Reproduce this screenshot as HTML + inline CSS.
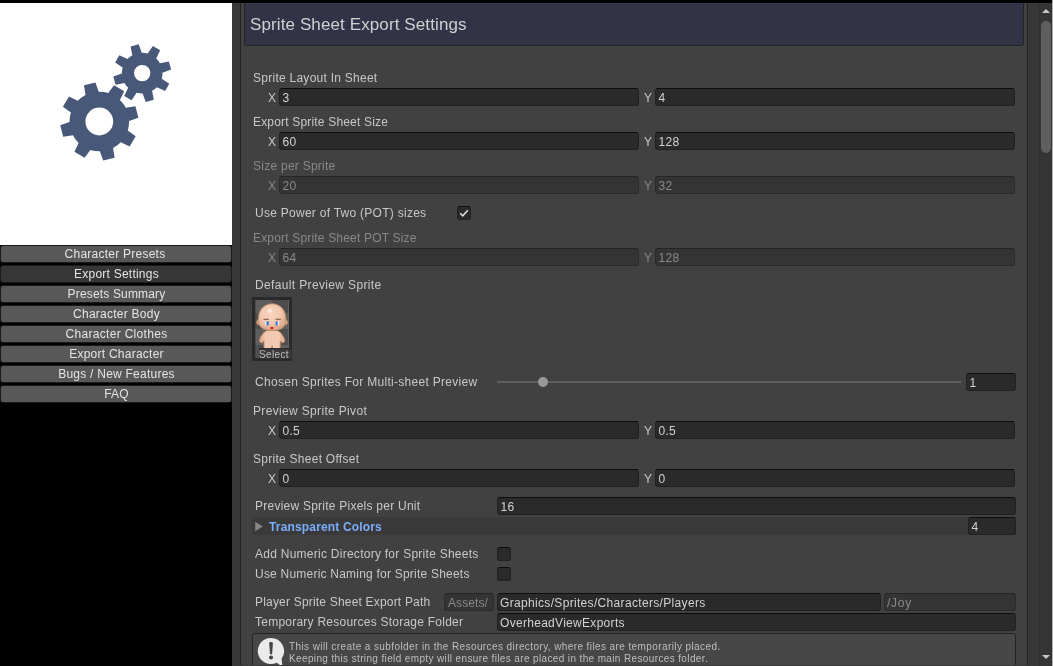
<!DOCTYPE html><html lang="en"><head><meta charset="utf-8"><title>Sprite Sheet Export Settings</title><style>
*{box-sizing:border-box;margin:0;padding:0}
html,body{width:1053px;height:666px;overflow:hidden;background:#383838}
body{position:relative;font-family:"Liberation Sans",sans-serif;font-size:12px;color:#d2d2d2;line-height:18px;-webkit-font-smoothing:antialiased}
.abs{position:absolute}
.lbl,.fld,.btn,.t{will-change:transform}
#topbar{left:0;top:0;width:1052px;height:3px;background:#000}
#left{left:0;top:3px;width:232px;height:663px;background:#000}
#logo{left:0;top:0;width:232px;height:242px;background:#fff}
.btn{position:absolute;left:0;width:232px;height:18px;border:1px solid #1a1a1a;border-radius:3px;background:#585858;color:#e4e4e4;text-align:center;padding-left:1px;line-height:16px;letter-spacing:.25px;white-space:nowrap}
.btn.sel{background:#363636}
#pane{left:240px;top:3px;width:788px;height:663px;border:1px solid #232323;border-top:0;background:#414141}
#head{left:244px;top:3px;width:780px;height:43px;border:1px solid #242424;border-top:0;border-radius:0 0 3px 3px;background:#333348}
#title{left:250px;top:13px;font-size:17px;line-height:24px;color:#d0d0d0;letter-spacing:0.111px;white-space:nowrap}
.lbl{position:absolute;white-space:nowrap;height:18px;line-height:18px;color:#c8c8c8;letter-spacing:.25px}
.dim{color:#888888}
.fld{position:absolute;height:18px;border:1px solid #212121;border-top-color:#0d0d0d;border-radius:3px;background:#2a2a2a;color:#d2d2d2;line-height:18px;padding-left:2.6px;white-space:nowrap;letter-spacing:.25px;overflow:hidden}
.fld.dis{background:#343434;border-color:#2b2b2b;border-top-color:#252525;color:#8a8a8a}
.chk{position:absolute;width:14px;height:14px;border:1px solid #212121;border-top-color:#0d0d0d;border-radius:3px;background:#2a2a2a}
.sb{left:1039px;top:3px;width:13px;height:663px;background:#353535;border-left:1px solid #303030}
#thumb{left:1041px;top:21px;width:10px;height:132px;border-radius:5px;background:#5f5f5f}
#edge{left:1052px;top:0;width:1px;height:666px;background:#b0b0b0}
</style></head><body>
<div id="topbar" class="abs"></div>
<div id="left" class="abs">
<div id="logo" class="abs"><svg width="232" height="242" viewBox="0 0 232 242"><path fill="#475878" fill-rule="evenodd" d="M129.09 117.92L138.36 114.63L135.44 103.20L125.74 104.74A29.80 29.80 0 0 0 119.96 97.02L124.18 88.15L114.04 82.13L108.27 90.08A29.80 29.80 0 0 0 98.72 88.71L95.43 79.44L84.00 82.36L85.54 92.06A29.80 29.80 0 0 0 77.82 97.84L68.95 93.62L62.93 103.76L70.88 109.53A29.80 29.80 0 0 0 69.51 119.08L60.24 122.37L63.16 133.80L72.86 132.26A29.80 29.80 0 0 0 78.64 139.98L74.42 148.85L84.56 154.87L90.33 146.92A29.80 29.80 0 0 0 99.88 148.29L103.17 157.56L114.60 154.64L113.06 144.94A29.80 29.80 0 0 0 120.78 139.16L129.65 143.38L135.67 133.24L127.72 127.47A29.80 29.80 0 0 0 129.09 117.92ZM113.20 118.50A13.90 13.90 0 1 0 85.40 118.50A13.90 13.90 0 1 0 113.20 118.50Z"/><path fill="#475878" fill-rule="evenodd" d="M162.50 69.66L171.09 66.60L168.89 58.50L159.93 60.21A20.30 20.30 0 0 0 156.24 55.44L160.16 47.20L152.87 43.02L147.74 50.57A20.30 20.30 0 0 0 141.76 49.80L138.70 41.21L130.60 43.41L132.31 52.37A20.30 20.30 0 0 0 127.54 56.06L119.30 52.14L115.12 59.43L122.67 64.56A20.30 20.30 0 0 0 121.90 70.54L113.31 73.60L115.51 81.70L124.47 79.99A20.30 20.30 0 0 0 128.16 84.76L124.24 93.00L131.53 97.18L136.66 89.63A20.30 20.30 0 0 0 142.64 90.40L145.70 98.99L153.80 96.79L152.09 87.83A20.30 20.30 0 0 0 156.86 84.14L165.10 88.06L169.28 80.77L161.73 75.64A20.30 20.30 0 0 0 162.50 69.66ZM150.40 70.10A8.20 8.20 0 1 0 134.00 70.10A8.20 8.20 0 1 0 150.40 70.10Z"/></svg></div>
<div class="btn" style="top:242px;letter-spacing:0.241px;padding-right:3px;">Character Presets</div>
<div class="btn sel" style="top:262px;letter-spacing:0.229px;">Export Settings</div>
<div class="btn" style="top:282px;letter-spacing:0.161px;">Presets Summary</div>
<div class="btn" style="top:302px;letter-spacing:0.254px;">Character Body</div>
<div class="btn" style="top:322px;letter-spacing:0.309px;">Character Clothes</div>
<div class="btn" style="top:342px;letter-spacing:0.243px;">Export Character</div>
<div class="btn" style="top:362px;letter-spacing:0.242px;">Bugs / New Features</div>
<div class="btn" style="top:382px;letter-spacing:0.15px;">FAQ</div>
</div>
<div id="pane" class="abs"></div>
<div id="head" class="abs"></div>
<div id="title" class="abs t">Sprite Sheet Export Settings</div>
<div class="lbl " style="left:253px;top:69px;letter-spacing:0.26px;">Sprite Layout In Sheet</div><div class="lbl " style="left:268px;top:89px;">X</div><div class="fld " style="left:279px;top:88px;width:360px;">3</div><div class="lbl " style="left:644px;top:89px;">Y</div><div class="fld " style="left:655px;top:88px;width:360px;">4</div>
<div class="lbl " style="left:253px;top:113px;letter-spacing:0.18px;">Export Sprite Sheet Size</div><div class="lbl " style="left:268px;top:133px;">X</div><div class="fld " style="left:279px;top:132px;width:360px;">60</div><div class="lbl " style="left:644px;top:133px;">Y</div><div class="fld " style="left:655px;top:132px;width:360px;">128</div>
<div class="lbl dim" style="left:253px;top:157px;letter-spacing:0.254px;">Size per Sprite</div><div class="lbl dim" style="left:268px;top:177px;">X</div><div class="fld dis" style="left:279px;top:176px;width:360px;">20</div><div class="lbl dim" style="left:644px;top:177px;">Y</div><div class="fld dis" style="left:655px;top:176px;width:360px;">32</div>
<div class="lbl " style="left:255px;top:204px;letter-spacing:0.27px;">Use Power of Two (POT) sizes</div>
<div class="chk" style="left:457px;top:206px"><svg width="12" height="12" viewBox="0 0 12 12" style="display:block"><path d="M2.2 6.2 L4.8 8.8 L9.8 3.2" fill="none" stroke="#e0e0e0" stroke-width="1.5"/></svg></div>
<div class="lbl dim" style="left:253px;top:229px;letter-spacing:0.178px;">Export Sprite Sheet POT Size</div><div class="lbl dim" style="left:268px;top:249px;">X</div><div class="fld dis" style="left:279px;top:248px;width:360px;">64</div><div class="lbl dim" style="left:644px;top:249px;">Y</div><div class="fld dis" style="left:655px;top:248px;width:360px;">128</div>
<div class="lbl " style="left:255px;top:276px;letter-spacing:0.355px;">Default Preview Sprite</div>
<svg class="abs" style="left:252px;top:297px" width="40" height="64" viewBox="252 297 40 64">
<rect x="252" y="297" width="40" height="64" fill="#2a2a2a"/>
<clipPath id="cp"><rect x="255.5" y="300" width="33.5" height="58"/></clipPath>
<g clip-path="url(#cp)">
<rect x="255" y="297" width="35" height="64" fill="#4d4d4d"/>
<rect x="255.5" y="297" width="16.2" height="16" fill="#5e5e5e"/>
<rect x="271.7" y="313" width="18" height="16" fill="#5e5e5e"/>
<rect x="255.5" y="329" width="16.2" height="16" fill="#5e5e5e"/>
<rect x="271.7" y="345" width="18" height="16" fill="#5e5e5e"/>
<rect x="255.5" y="300" width="0.7" height="58" fill="#6c6c6c"/>
<rect x="288.3" y="300" width="0.7" height="58" fill="#6c6c6c"/>
<defs><radialGradient id="hg" cx="0.45" cy="0.38" r="0.62"><stop offset="0" stop-color="#f8d6c0"/><stop offset="0.6" stop-color="#f1c8ae"/><stop offset="1" stop-color="#d9a585"/></radialGradient>
<linearGradient id="bg" x1="0" x2="1" y1="0" y2="0"><stop offset="0" stop-color="#d9a585"/><stop offset="0.25" stop-color="#f2cab1"/><stop offset="0.75" stop-color="#f2cab1"/><stop offset="1" stop-color="#d9a585"/></linearGradient></defs>
<g stroke="#b98463" stroke-width="0.9" stroke-linejoin="round">
<path fill="url(#bg)" d="M267.9 330.2 L276.3 330.2 Q280.6 331.6 281.6 334 Q284.4 337 285 340.6 Q284.6 342.9 282.6 342.7 Q281 342.6 280.3 341 L280.2 349 L272.8 349 L272.1 345.6 L271.4 349 L264 349 L263.9 341 Q263.2 342.6 261.6 342.7 Q259.6 342.9 259.2 340.6 Q259.8 337 262.6 334 Q263.6 331.6 267.9 330.2 Z"/>
<ellipse fill="#eec2a6" cx="258.3" cy="322.3" rx="1.5" ry="2.5"/>
<ellipse fill="#eec2a6" cx="285.9" cy="322.3" rx="1.5" ry="2.5"/>
<path fill="url(#hg)" d="M272.1 303.7 C279 303.7 285 309 285.6 316 C286.2 321 286.3 324 283.5 327 C281 329.8 277 330.4 272.1 330.4 C267.2 330.4 263.2 329.8 260.7 327 C257.9 324 258 321 258.6 316 C259.2 309 265.2 303.7 272.1 303.7 Z"/>
</g>
<ellipse cx="269.9" cy="310.8" rx="2.3" ry="2" fill="#fde8dc"/>
<rect x="263.5" y="318.7" width="5.3" height="1.3" fill="#8f6d55"/>
<rect x="275.6" y="318.7" width="5.3" height="1.3" fill="#8f6d55"/>
<rect x="265.3" y="321.4" width="1.3" height="4" fill="#f4f4f8"/>
<rect x="266.5" y="321.4" width="2.3" height="4" fill="#3f73dc"/>
<rect x="275.6" y="321.4" width="2.3" height="4" fill="#3f73dc"/>
<rect x="277.8" y="321.4" width="1.2" height="4" fill="#f4f4f8"/>
<rect x="270.3" y="327" width="3.3" height="1.9" rx="0.8" fill="#e6101f"/>
</g>
<rect x="259.7" y="348.4" width="31.6" height="10" fill="#3b3b3b"/>
<rect x="259.7" y="348.2" width="31.6" height="1" fill="#222222"/>
</svg>
<div class="abs t" style="left:259px;top:349px;font-size:10px;line-height:12px;height:12px;color:#bdbdbd;letter-spacing:0.37px;white-space:nowrap">Select</div>
<div class="lbl " style="left:255px;top:373px;letter-spacing:0.289px;">Chosen Sprites For Multi-sheet Preview</div>
<div class="abs" style="left:497px;top:381px;width:464px;height:2px;background:#5e5e5e"></div>
<div class="abs" style="left:538px;top:377px;width:10px;height:10px;border-radius:5px;background:#999999"></div>
<div class="fld " style="left:966px;top:373px;width:50px;">1</div>
<div class="lbl " style="left:253px;top:402px;letter-spacing:0.337px;">Preview Sprite Pivot</div><div class="lbl " style="left:268px;top:422px;">X</div><div class="fld " style="left:279px;top:421px;width:360px;">0.5</div><div class="lbl " style="left:644px;top:422px;">Y</div><div class="fld " style="left:655px;top:421px;width:360px;">0.5</div>
<div class="lbl " style="left:253px;top:450px;letter-spacing:0.269px;">Sprite Sheet Offset</div><div class="lbl " style="left:268px;top:470px;">X</div><div class="fld " style="left:279px;top:469px;width:360px;">0</div><div class="lbl " style="left:644px;top:470px;">Y</div><div class="fld " style="left:655px;top:469px;width:360px;">0</div>
<div class="lbl " style="left:255px;top:497px;letter-spacing:0.241px;">Preview Sprite Pixels per Unit</div>
<div class="fld " style="left:497px;top:497px;width:519px;">16</div>
<div class="abs" style="left:252px;top:517px;width:764px;height:18px;background:#3a3a3a"></div>
<svg class="abs" style="left:255px;top:521px" width="8" height="11" viewBox="0 0 8 11"><path d="M0.2 0.8 L7.8 5.5 L0.2 10.2 Z" fill="#868686"/></svg>
<div class="lbl " style="left:269px;top:518px;font-weight:bold;color:#7baefa;letter-spacing:0.159px;">Transparent Colors</div>
<div class="fld " style="left:968px;top:517px;width:48px;">4</div>
<div class="lbl " style="left:255px;top:545px;letter-spacing:0.261px;">Add Numeric Directory for Sprite Sheets</div>
<div class="chk" style="left:497px;top:547px"></div>
<div class="lbl " style="left:255px;top:565px;letter-spacing:0.219px;">Use Numeric Naming for Sprite Sheets</div>
<div class="chk" style="left:497px;top:567px"></div>
<div class="lbl " style="left:255px;top:593px;letter-spacing:0.192px;">Player Sprite Sheet Export Path</div>
<div class="fld dis" style="left:444px;top:593px;width:50px;padding-left:3px;letter-spacing:0.075px;">Assets/</div>
<div class="fld " style="left:497px;top:593px;width:384px;padding-left:2px;letter-spacing:0.328px;">Graphics/Sprites/Characters/Players</div>
<div class="fld dis" style="left:884px;top:593px;width:132px;padding-left:2px;letter-spacing:0.767px;">/Joy</div>
<div class="lbl " style="left:255px;top:613px;letter-spacing:0.239px;">Temporary Resources Storage Folder</div>
<div class="fld " style="left:497px;top:613px;width:519px;padding-left:2px;letter-spacing:0.297px;">OverheadViewExports</div>
<div class="abs" style="left:252px;top:633px;width:764px;height:40px;border:1px solid #232323;border-radius:3px;background:#474747"></div>
<div class="abs t" style="left:289px;top:641px;font-size:10px;line-height:12px;height:12px;color:#bebebe;letter-spacing:0.404px;white-space:nowrap">This will create a subfolder in the Resources directory, where files are temporarily placed.</div>
<div class="abs t" style="left:289px;top:653px;font-size:10px;line-height:12px;height:12px;color:#bebebe;letter-spacing:0.37px;white-space:nowrap">Keeping this string field empty will ensure files are placed in the main Resources folder.</div>
<svg class="abs" style="left:256px;top:636px" width="30" height="30" viewBox="256 636 30 30">
<path d="M270.85 637.9 A13.1 13.1 0 1 0 276.6 662.8 L282.4 666.6 L281.6 658.6 A13.1 13.1 0 0 0 270.85 637.9 Z" fill="#eaeaea"/>
<path d="M269.2 643.2 Q269.2 641.9 271 641.9 Q272.9 641.9 272.9 643.2 L272.1 654.2 L270 654.2 Z" fill="#444444"/>
<circle cx="271.05" cy="657.4" r="2" fill="#444444"/>
</svg>
<div class="abs sb"></div><div class="abs" id="thumb"></div>
<svg class="abs" style="left:1041px;top:8px" width="10" height="6" viewBox="0 0 10 6"><path d="M1 5 L5 1 L9 5 Z" fill="#c8c8c8"/></svg>
<svg class="abs" style="left:1041px;top:654px" width="10" height="6" viewBox="0 0 10 6"><path d="M1 1 L5 5 L9 1 Z" fill="#c8c8c8"/></svg>
<div class="abs" style="left:240px;top:665px;width:788px;height:1px;background:#3a3a3a"></div>
<div class="abs" id="edge"></div>
</body></html>
